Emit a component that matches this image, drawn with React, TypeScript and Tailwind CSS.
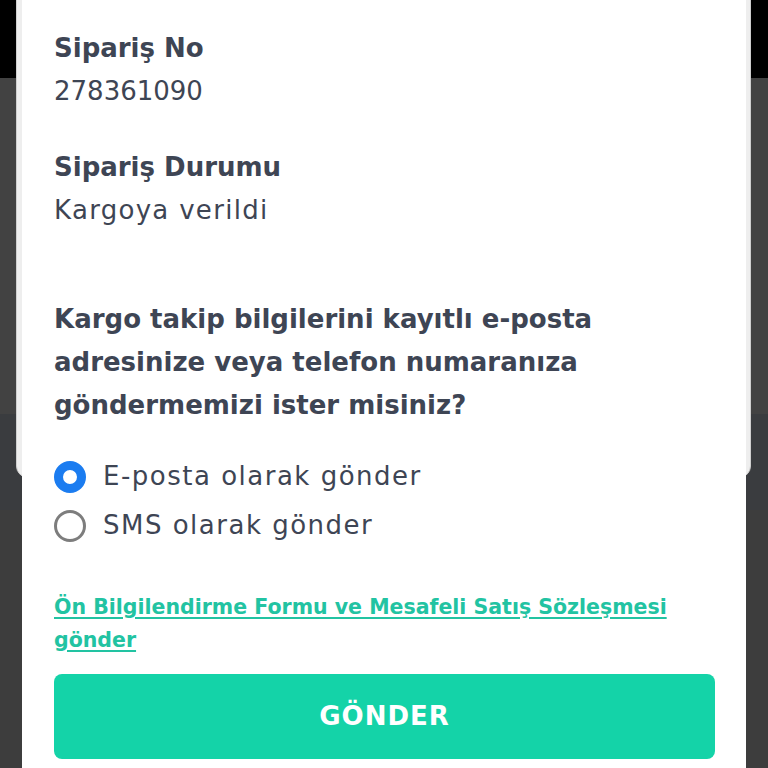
import { useState } from 'react';

const font = { fontFamily: '"DejaVu Sans", "Noto Sans", sans-serif' };

function Radio({ checked, label, onClick }: { checked: boolean; label: string; onClick: () => void }) {
  return (
    <button onClick={onClick} className="flex h-[49px] items-center gap-[17px] text-left">
      {checked ? (
        <span className="block h-[32px] w-[32px] shrink-0 rounded-full border-[9px] border-[#1b7cf0] bg-white" />
      ) : (
        <span className="block h-[32px] w-[32px] shrink-0 rounded-full border-[3px] border-[#7d7d7d] bg-white" />
      )}
      <span className="text-[26px] leading-[43px] tracking-[1.5px] text-[#3e4554]">{label}</span>
    </button>
  );
}

export default function App() {
  const [channel, setChannel] = useState<'email' | 'sms'>('email');

  return (
    <div style={font} className="relative h-[768px] w-[768px] overflow-hidden bg-[#3d3d3d]">
      <div className="h-[78px] bg-black" />
      <div className="h-[336px] bg-[#424242]" />
      <div className="h-[96px] bg-[#3a3c3f]" />

      {/* card behind the sheet */}
      <div className="absolute left-[16px] top-[-20px] h-[498px] w-[735px] rounded-b-[12px] border border-[#cfcfcf] bg-[#eeeeee]" />

      {/* sheet */}
      <div className="absolute left-[22px] top-0 bottom-[-20px] w-[724px] bg-white px-[32px] pt-[27px]">
        <div className="text-[26px] leading-[43px] text-[#3e4554]">
          <p className="font-bold">Sipariş No</p>
          <p>278361090</p>
        </div>
        <div className="mt-[33px] text-[26px] leading-[43px] text-[#3e4554]">
          <p className="font-bold">Sipariş Durumu</p>
          <p className="tracking-[1.3px]">Kargoya verildi</p>
        </div>
        <p className="mt-[66px] w-[620px] text-[26px] font-bold leading-[43px] text-[#3e4554]">
          Kargo takip bilgilerini kayıtlı e-posta adresinize veya telefon numaranıza göndermemizi ister misiniz?
        </p>
        <div className="mt-[25px] flex flex-col">
          <Radio checked={channel === 'email'} label="E-posta olarak gönder" onClick={() => setChannel('email')} />
          <Radio checked={channel === 'sms'} label="SMS olarak gönder" onClick={() => setChannel('sms')} />
        </div>
        <a href="#" className="mt-[41px] block w-[640px] text-[20.5px] font-semibold leading-[33px] text-[#22c3a2] underline underline-offset-[3px]">
          Ön Bilgilendirme Formu ve Mesafeli Satış Sözleşmesi gönder
        </a>
        <button className="mt-[17px] flex h-[85px] w-[661px] items-center justify-center rounded-[8px] bg-[#14d3a8] text-[26px] font-semibold tracking-[1px] text-white">
          GÖNDER
        </button>
      </div>
    </div>
  );
}
